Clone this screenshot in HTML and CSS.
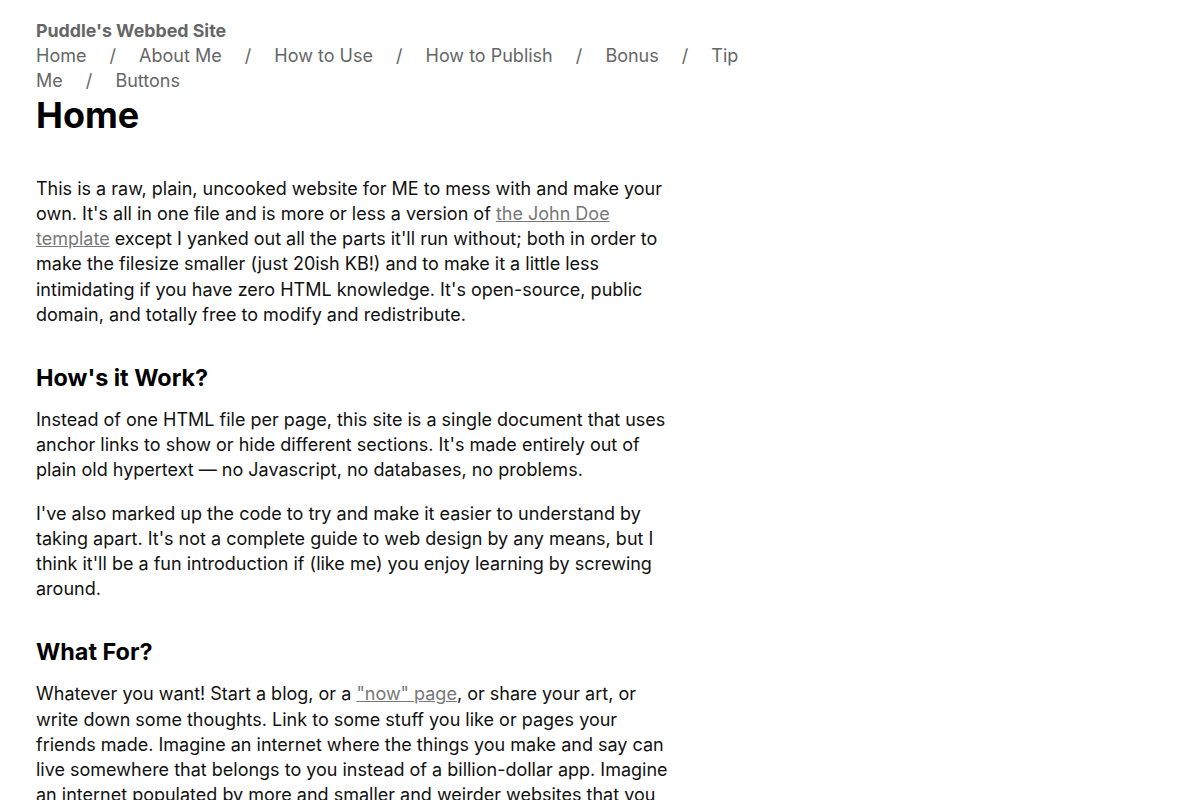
FILE: index.html
```html
<!DOCTYPE html>
<html lang="en">
<head>
<meta charset="utf-8">
<title>Puddle's Webbed Site</title>
<link rel="stylesheet" href="styles.css">
</head>
<body>
<div class="page">
  <header class="site-header">
    <div class="site-title">Puddle's Webbed Site</div>
    <nav class="nav">
      <a href="#home">Home</a> <span class="sep">/</span> <a href="#about">About Me</a> <span class="sep">/</span> <a href="#use">How to Use</a> <span class="sep">/</span> <a href="#publish">How to Publish</a> <span class="sep">/</span> <a href="#bonus">Bonus</a> <span class="sep">/</span> <a href="#tip">Tip Me</a> <span class="sep">/</span> <a href="#buttons">Buttons</a>
    </nav>
  </header>
  <main class="content">
    <h1 class="page-title">Home</h1>
    <p>This is a raw, plain, uncooked website for ME to mess with and make your own. It's all in one file and is more or less a version of <a class="text-link" href="#jd">the John Doe template</a> except I yanked out all the parts it'll run without; both in order to make the filesize smaller (just 20ish KB!) and to make it a little less intimidating if you have zero HTML knowledge. It's open-source, public domain, and totally free to modify and redistribute.</p>
    <h2>How's it Work?</h2>
    <p>Instead of one HTML file per page, this site is a single document that uses anchor links to show or hide different sections. It's made entirely out of plain old hypertext — no Javascript, no databases, no problems.</p>
    <p>I've also marked up the code to try and make it easier to understand by taking apart. It's not a complete guide to web design by any means, but I think it'll be a fun introduction if (like me) you enjoy learning by screwing around.</p>
    <h2>What For?</h2>
    <p>Whatever you want! Start a blog, or a <a class="text-link" href="#now">"now" page</a>, or share your art, or write down some thoughts. Link to some stuff you like or pages your friends made. Imagine an internet where the things you make and say can live somewhere that belongs to you instead of a billion-dollar app. Imagine an internet populated by more and smaller and weirder websites that you can explore and get lost in.</p>
  </main>
</div>
</body>
</html>
```

FILE: styles.css
```css
html, body {
  margin: 0;
  padding: 0;
  background: #ffffff;
}

body {
  font-family: Inter, "Noto Sans", sans-serif;
  font-size: 18px;
  line-height: 1.4;
  color: #111111;
}

.page {
  padding: 18px 36px 40px;
}

.site-header {
  width: 720px;
}

.site-title {
  font-weight: 700;
  font-size: 17.8px;
  line-height: 25.2px;
  color: #666666;
}

.nav a {
  color: #666666;
  text-decoration: none;
}

.nav .sep {
  color: #666666;
  margin: 0 18px;
}

.content {
  width: 640px;
}

.page-title {
  font-size: 36px;
  line-height: 1.2;
  font-weight: 700;
  margin: 0 0 39px;
  color: #000000;
}

h2 {
  font-size: 23.4px;
  line-height: 1.2;
  font-weight: 700;
  margin: 37px 0 15px;
  color: #000000;
}

p {
  margin: 0 0 18px;
}

.text-link {
  color: #777777;
  text-decoration: underline;
}
```
